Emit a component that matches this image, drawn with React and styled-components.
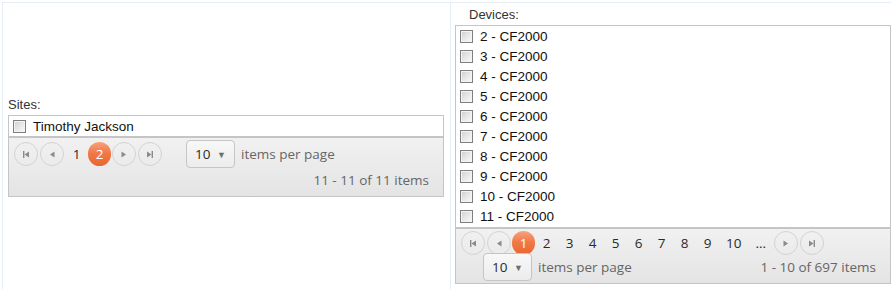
import React from "react";
import styled, { createGlobalStyle, css } from "styled-components";

const Global = createGlobalStyle`
  html, body { margin: 0; padding: 0; background: #fff; }
  body { font-family: "Open Sans", "Noto Sans", sans-serif; font-size: 13px; }
`;

const Frame = styled.div`
  margin: 2px 0 0 2px;
  width: 889px;
  height: 287px;
  box-sizing: border-box;
  border-top: 1px solid #e6edf5;
  border-left: 1px solid #e6edf5;
  display: grid;
  grid-template-columns: 447px 441px;
  align-items: center;
`;

const Cell = styled.div`
  box-sizing: border-box;
  align-self: ${(p) => (p.$stretch ? "stretch" : "center")};
  padding: ${(p) => (p.$right ? "2px 0 0 4px" : "0 6px 0 5px")};
  border-left: ${(p) => (p.$right ? "1px solid #e6edf5" : "none")};
`;

const Label = styled.div`
  height: 20px;
  line-height: 20px;
  padding-left: ${(p) => p.$indent || 0}px;
  font-family: "Liberation Sans", Arial, sans-serif;
  font-size: 13px;
  color: #333;
  overflow: hidden;
`;

const ListBox = styled.div`
  border: 1px solid #c5c5c5;
  background: #fff;
  padding-bottom: ${(p) => p.$pad || 0}px;
`;

const Row = styled.label`
  display: flex;
  align-items: center;
  height: 20px;
  padding-left: 4px;
  font-family: "Liberation Sans", Arial, sans-serif;
  font-size: 13.5px;
  color: #111;
  white-space: nowrap;
`;

const Check = styled.span`
  display: inline-block;
  width: 13px;
  height: 13px;
  box-sizing: border-box;
  border: 1px solid #7f7f7f;
  background: linear-gradient(135deg, #cfcfcf 0%, #e9e9e9 55%, #fafafa 100%);
  box-shadow: inset 0 0 0 1px #f4f4f4;
  margin-right: 7px;
  flex: none;
`;

const Pager = styled.div`
  display: flex;
  flex-wrap: wrap;
  align-items: center;
  border: 1px solid #c5c5c5;
  padding: 2px 4px ${(p) => p.$bottom}px 4px;
  background: linear-gradient(to bottom, #f1f1f1 0%, #e4e4e4 100%);
  color: #666;
`;

const Buttons = styled.div`
  display: flex;
  align-items: center;
  height: 24px;
  margin-bottom: ${(p) => p.$mb || 0}px;
`;

const NavBtn = styled.span`
  display: inline-flex;
  align-items: center;
  justify-content: center;
  width: 24px;
  height: 24px;
  box-sizing: border-box;
  border: 1px solid #d3d3d3;
  border-radius: 50%;
  margin: 0 1px;
`;

const PageNum = styled.span`
  display: inline-flex;
  align-items: center;
  justify-content: center;
  box-sizing: border-box;
  min-width: 23px;
  height: 24px;
  padding: 0 7px;
  border-radius: 12px;
  color: #2a2a2a;
  font-size: 13.5px;
  ${(p) =>
    p.$selected &&
    css`
      color: #fff;
      background: linear-gradient(to bottom, #f8a27c 0%, #f07a48 45%, #ea6530 100%);
    `}
`;

const Sizes = styled.div`
  display: flex;
  align-items: center;
  margin-left: 23px;
  height: 28px;
`;

const Select = styled.span`
  display: inline-flex;
  align-items: center;
  justify-content: space-between;
  box-sizing: border-box;
  width: 49px;
  height: 28px;
  padding: 0 8px 0 8px;
  border: 1px solid #c5c5c5;
  border-radius: 4px;
  background: linear-gradient(to bottom, #f8f8f8, #ececec);
  color: #2a2a2a;
  font-size: 13.5px;
`;

const Caret = styled.span`
  font-size: 9px;
  color: #6f6f6f;
`;

const SizesText = styled.span`
  margin-left: 6px;
  color: #666;
  font-size: 13.5px;
`;

const Info = styled.span`
  margin-left: auto;
  margin-right: 10px;
  line-height: ${(p) => p.$lh}px;
  color: #666;
  font-size: 13.5px;
  white-space: nowrap;
`;

const Arrow = ({ kind }) => {
  const tri = {
    first: "M8 3.5 L3.5 6.5 L8 9.5 Z",
    prev: "M7.5 3.5 L3 6.5 L7.5 9.5 Z",
    next: "M2.5 3.5 L7 6.5 L2.5 9.5 Z",
    last: "M2 3.5 L6.5 6.5 L2 9.5 Z",
  }[kind];
  return (
    <svg width="10" height="13" viewBox="0 0 10 13">
      <path d={tri} fill="#8a8a8a" />
      {kind === "first" && <rect x="2" y="3" width="1.4" height="7" fill="#8a8a8a" />}
      {kind === "last" && <rect x="6.6" y="3" width="1.4" height="7" fill="#8a8a8a" />}
    </svg>
  );
};

const PagerBar = ({ pages, selected, ellipsis, info, bottom, infoLh, mb }) => (
  <Pager $bottom={bottom}>
    <Buttons $mb={mb}>
      <NavBtn><Arrow kind="first" /></NavBtn>
      <NavBtn><Arrow kind="prev" /></NavBtn>
      {pages.map((n) => (
        <PageNum key={n} $selected={n === selected}>{n}</PageNum>
      ))}
      {ellipsis && <PageNum>...</PageNum>}
      <NavBtn><Arrow kind="next" /></NavBtn>
      <NavBtn><Arrow kind="last" /></NavBtn>
    </Buttons>
    <Sizes>
      <Select>
        10<Caret>▼</Caret>
      </Select>
      <SizesText>items per page</SizesText>
    </Sizes>
    <Info $lh={infoLh}>{info}</Info>
  </Pager>
);

const devices = [
  "2 - CF2000",
  "3 - CF2000",
  "4 - CF2000",
  "5 - CF2000",
  "6 - CF2000",
  "7 - CF2000",
  "8 - CF2000",
  "9 - CF2000",
  "10 - CF2000",
  "11 - CF2000",
];

export default function App() {
  return (
    <>
      <Global />
      <Frame>
        <Cell>
          <Label>Sites:</Label>
          <ListBox>
            <Row>
              <Check />
              Timothy Jackson
            </Row>
          </ListBox>
          <PagerBar
            pages={[1, 2]}
            selected={2}
            info="11 - 11 of 11 items"
            bottom={4}
            infoLh={24}
          />
        </Cell>
        <Cell $right $stretch>
          <Label $indent={14}>Devices:</Label>
          <ListBox $pad={1}>
            {devices.map((d) => (
              <Row key={d}>
                <Check />
                {d}
              </Row>
            ))}
          </ListBox>
          <PagerBar
            pages={[1, 2, 3, 4, 5, 6, 7, 8, 9, 10]}
            selected={1}
            ellipsis
            info="1 - 10 of 697 items"
            bottom={2}
            infoLh={28}
            mb={-2}
          />
        </Cell>
      </Frame>
    </>
  );
}
